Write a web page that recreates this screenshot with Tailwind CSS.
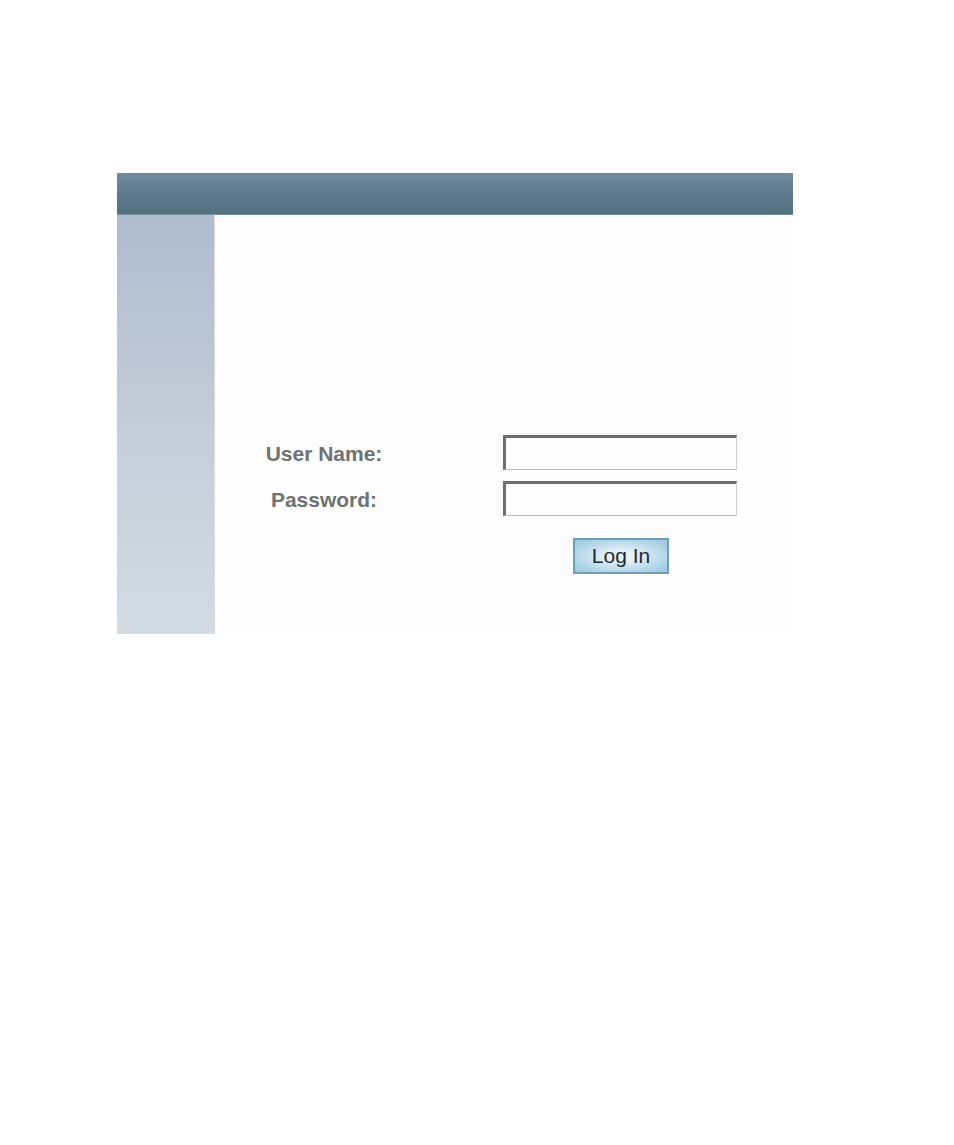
<!DOCTYPE html>
<html lang="en">
<head>
    <meta charset="UTF-8">
    <meta name="viewport" content="width=device-width, initial-scale=1.0">
    <title>Log In</title>
    <script src="https://cdn.jsdelivr.net/npm/@tailwindcss/browser@4"></script>
</head>
<body class="bg-white font-['Liberation_Sans',Arial,sans-serif] pt-[173px] pl-[117px] pr-[161px] pb-16">
    <div>
        <header class="h-[42px] bg-linear-to-b from-[#708c9e] via-[#5f7a8c] to-[#52707f] border-b border-[#71909a]"></header>

        <div class="flex">
            <aside class="w-[98px] shrink-0 bg-linear-to-b from-[#afbccf] via-[#c4cdd8] to-[#d3dce3] border-r border-[#d5dade]"></aside>

            <main class="flex-1 bg-[#fdfdfd] pt-[220px] pl-[50px] pr-14 pb-[60px]">
                <form id="loginForm">
                    <div class="flex items-center justify-between mb-[11px]">
                        <label for="username" class="w-[118px] pt-0.5 text-center whitespace-nowrap text-[21px] leading-6 font-bold text-[#6d7272]">User Name:</label>
                        <input type="text" id="username" class="w-[234px] h-[35px] px-2 text-lg bg-[#fdfdfd] border-t-3 border-l-3 border-r border-b border-t-[#6e6e6e] border-l-[#6e6e6e] border-r-[#cfcfcf] border-b-[#bdbdbd] outline-none">
                    </div>
                    <div class="flex items-center justify-between mb-[22px]">
                        <label for="password" class="w-[118px] pt-0.5 text-center whitespace-nowrap text-[21px] leading-6 font-bold text-[#6d7272]">Password:</label>
                        <input type="password" id="password" class="w-[234px] h-[35px] px-2 text-lg bg-[#fdfdfd] border-t-3 border-l-3 border-r border-b border-t-[#6e6e6e] border-l-[#6e6e6e] border-r-[#cfcfcf] border-b-[#bdbdbd] outline-none">
                    </div>
                    <div class="flex justify-end">
                        <div class="w-[234px] pl-0.5 flex justify-center">
                            <button type="submit" class="w-24 h-9 text-[21px] leading-6 text-[#1f2a33] border-2 border-[#6f9fb8] bg-radial from-[#e6f2f9] from-20% to-[#94c6de] cursor-pointer">Log In</button>
                        </div>
                    </div>
                </form>
            </main>
        </div>
    </div>
</body>
</html>
